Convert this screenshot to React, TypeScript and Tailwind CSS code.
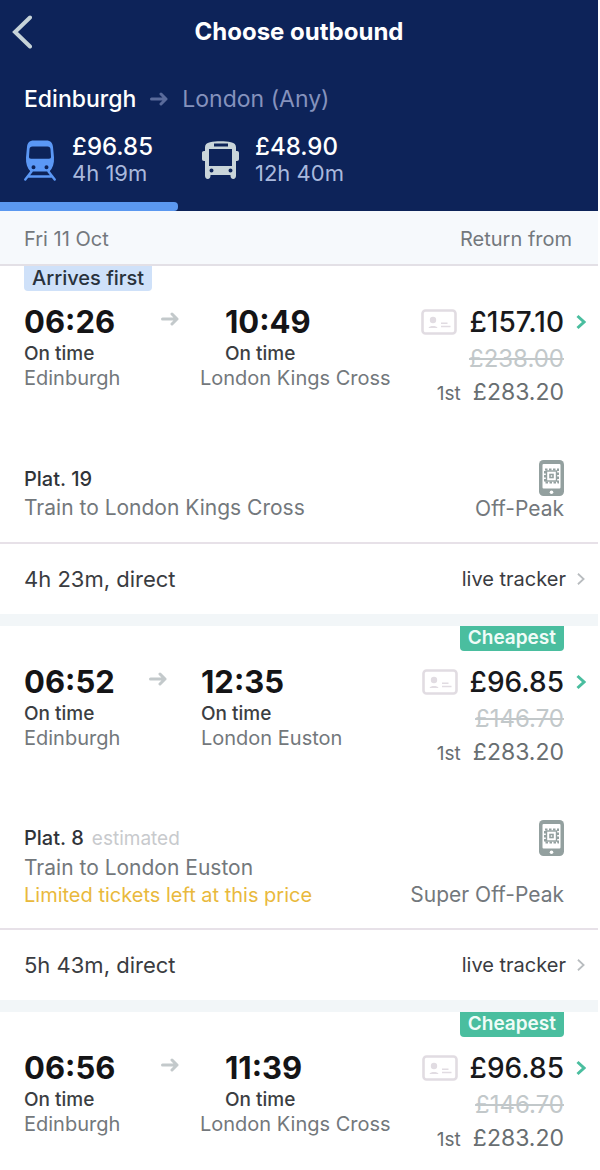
import { useState } from "react";
import clsx from "clsx";

type Journey = {
  departs: string;
  arrives: string;
  from: string;
  to: string;
  indent: boolean;
  badge: "first" | "cheapest";
  price: string;
  oldPrice: string;
  firstClass: string;
  platform?: string;
  estimated?: boolean;
  limited?: boolean;
  ticket?: string;
  duration?: string;
};

const FARES = [
  { id: "train", price: "£96.85", duration: "4h 19m" },
  { id: "coach", price: "£48.90", duration: "12h 40m" },
];

const JOURNEYS: Journey[] = [
  {
    departs: "06:26",
    arrives: "10:49",
    from: "Edinburgh",
    to: "London Kings Cross",
    indent: true,
    badge: "first",
    price: "£157.10",
    oldPrice: "£238.00",
    firstClass: "£283.20",
    platform: "19",
    ticket: "Off-Peak",
    duration: "4h 23m, direct",
  },
  {
    departs: "06:52",
    arrives: "12:35",
    from: "Edinburgh",
    to: "London Euston",
    indent: false,
    badge: "cheapest",
    price: "£96.85",
    oldPrice: "£146.70",
    firstClass: "£283.20",
    platform: "8",
    estimated: true,
    limited: true,
    ticket: "Super Off-Peak",
    duration: "5h 43m, direct",
  },
  {
    departs: "06:56",
    arrives: "11:39",
    from: "Edinburgh",
    to: "London Kings Cross",
    indent: true,
    badge: "cheapest",
    price: "£96.85",
    oldPrice: "£146.70",
    firstClass: "£283.20",
  },
];

function Arrow({ className }: { className: string }) {
  return (
    <svg
      className={className}
      viewBox="0 0 18 16"
      fill="none"
      stroke="currentColor"
      strokeLinecap="round"
      strokeLinejoin="round"
    >
      <path d="M1.5 8H16M11 3l5 5-5 5" />
    </svg>
  );
}

function Chevron({ className }: { className: string }) {
  return (
    <svg className={className} viewBox="0 0 10 16" fill="none" stroke="currentColor">
      <path d="M1.5 2L8 8l-6.5 6" />
    </svg>
  );
}

function TrainIcon() {
  return (
    <svg className="w-8 h-[41px] text-[#5b98f6]" viewBox="0 0 32 41" fill="currentColor">
      <path
        fillRule="evenodd"
        d="M10 .5h12c5 0 6.500 2.500 7 6.500l1 10.500c.3 6-1.200 10.500-4.500 14h-19C3.200 28 1.700 23.500 2 17.500L3 7C3.500 3 5 .5 10 .5ZM8.500 6.500c-2 0-2.800.8-3 2.800L5 16.500c-.1 1.500.6 2.200 2 2.200h18c1.400 0 2.100-.7 2-2.200l-.5-7.200c-.2-2-1-2.800-3-2.800h-15ZM9.500 25.200a2 2 0 1 0 0 4 2 2 0 0 0 0-4Zm13 0a2 2 0 1 0 0 4 2 2 0 0 0 0-4Z"
      />
      <path
        d="M7.500 31.500L1.300 39.500M24.500 31.500l6.200 8M5 36.500h22"
        fill="none"
        stroke="currentColor"
        strokeWidth="2.400"
        strokeLinecap="round"
      />
    </svg>
  );
}

function CoachIcon() {
  return (
    <svg className="w-[37px] h-[38px] text-[#c9d5da]" viewBox="0 0 37 38" fill="currentColor">
      <path
        fillRule="evenodd"
        d="M8 1.200C14-.2 23-.2 29 1.200c3.500.8 5 2.300 5 5V10h1c1.300 0 2 .8 2 2v6c0 1.300-.7 2-2 2h-1v14.500c0 2-1 3.500-2.800 3.500-1.700 0-2.700-1.500-2.700-3.500V34h-20v.5c0 2-1 3.500-2.700 3.500C4 38 3 36.500 3 34.500V20H2c-1.300 0-2-.7-2-2v-6c0-1.200.7-2 2-2h1V6.200c0-2.700 1.500-4.200 5-5ZM12 2.500V5.500h14v-3H12ZM7 8v17h23V8H7Zm2.500 19.500a2 2 0 1 0 0 4 2 2 0 0 0 0-4Zm19 0a2 2 0 1 0 0 4 2 2 0 0 0 0-4Z"
      />
    </svg>
  );
}

function RailcardIcon() {
  return (
    <svg className="w-9 h-[26px] text-[#e1dce2]" viewBox="0 0 36 26" fill="none" stroke="currentColor">
      <rect x="1.500" y="1.500" width="33" height="23" rx="3" strokeWidth="2.600" />
      <circle cx="12" cy="11" r="3.200" fill="currentColor" stroke="none" />
      <path d="M7.500 19c1-2.600 8-2.600 9 0Z" fill="currentColor" stroke="none" />
      <path d="M20 14.200h6.500M20 17.500h9.500" strokeWidth="1.400" />
    </svg>
  );
}

function MobileTicketIcon() {
  return (
    <svg className="w-[25px] h-9 text-[#93a09f]" viewBox="0 0 25 36">
      <rect width="25" height="36" rx="4.500" fill="currentColor" />
      <rect x="3.500" y="4" width="18" height="24.500" rx="1" fill="#fff" />
      <circle cx="12.500" cy="32.200" r="1.800" fill="#fff" />
      <g fill="none" stroke="currentColor">
        <rect x="6" y="9.500" width="13" height="13" strokeWidth="2" strokeDasharray="2.500 1.500" />
        <rect x="7.500" y="11" width="10" height="10" strokeWidth="1.400" />
        <rect x="11" y="14.500" width="3" height="3" strokeWidth="1.600" />
      </g>
    </svg>
  );
}

function Badge({ type }: { type: Journey["badge"] }) {
  if (type === "first") {
    return (
      <span className="rounded-b-sm bg-[#cfe1f9] px-2 text-[20px] leading-6 font-medium text-[#29323c]">
        Arrives first
      </span>
    );
  }
  return (
    <span className="ml-auto rounded-b-sm bg-[#4abe9f] px-2 text-[19px] leading-6 font-semibold text-[#f0fcf8]">
      Cheapest
    </span>
  );
}

function JourneyCard({ journey }: { journey: Journey }) {
  return (
    <article className="bg-white">
      <div className="flex h-[25px] pl-6 pr-[34px]">
        <Badge type={journey.badge} />
      </div>

      {/* Times and prices */}
      <div className="flex justify-between pl-6 pr-3 pt-3">
        <div className="whitespace-nowrap">
          <div className="flex text-[31px] leading-[38px] font-bold text-[#141416]">
            <div className={clsx("flex", journey.indent ? "w-[201px]" : "w-[177px]")}>
              <time>{journey.departs}</time>
              <Arrow className="mx-auto mt-2 w-[18px] h-4 stroke-[3] text-[#c3c9cb]" />
            </div>
            <time>{journey.arrives}</time>
          </div>
          <div className="flex text-[19px] leading-[25px] font-medium text-[#3b3e42]">
            <span className={journey.indent ? "w-[201px]" : "w-[177px]"}>On time</span>
            <span>On time</span>
          </div>
          <div className="flex text-[20px] leading-6 text-[#73787c]">
            <span className={journey.indent ? "w-44" : "w-[177px]"}>{journey.from}</span>
            <span>{journey.to}</span>
          </div>
        </div>
        <div className="flex flex-col items-end">
          <button className="flex items-center text-[28px] leading-[38px] font-medium text-[#18191c]">
            <RailcardIcon />
            <span className="ml-3">{journey.price}</span>
            <Chevron className="ml-3 w-2.5 h-4 stroke-[3] text-[#4abe9f]" />
          </button>
          <del className="mr-[22px] text-[24px] leading-9 text-[#c2c8ca] decoration-2">{journey.oldPrice}</del>
          <p className="mr-[22px] flex items-baseline gap-3 text-[23px] leading-[30px] text-[#686e71]">
            <span className="text-[19px]">1st</span>
            {journey.firstClass}
          </p>
        </div>
      </div>

      {/* Platform and ticket type */}
      {journey.ticket && (
        <div className="flex items-end justify-between pl-6 pr-[34px] pt-[51px] pb-5">
          <div>
            <p className="text-[20px] leading-[30px] font-medium text-[#303338]">
              Plat. {journey.platform}
              {journey.estimated && <span className="ml-2 text-[19px] font-normal text-[#c8cacd]">estimated</span>}
            </p>
            <p className="text-[21px] leading-7 text-[#73787c]">
              Train to {journey.to}
            </p>
            {journey.limited && (
              <p className="text-[20px] leading-[26px] text-[#e9b93c]">
                Limited tickets left at this price
              </p>
            )}
          </div>
          <div className={clsx("flex flex-col items-end text-[21px] leading-[26px] text-[#73787c]", journey.limited && "gap-[26px]")}>
            <MobileTicketIcon />
            {journey.ticket}
          </div>
        </div>
      )}

      {journey.duration && (
        <div className="flex items-center justify-between border-t-2 border-[#e7e1e8] pl-6 pr-3 text-[22px] leading-[70px] text-[#3a3c41]">
          <span>{journey.duration}</span>
          <a href="#tracker" className="flex items-center text-[20px]">
            live tracker
            <Chevron className="ml-2.5 w-2.5 h-3.5 stroke-2 text-[#b8bcbf]" />
          </a>
        </div>
      )}
    </article>
  );
}

export default function App() {
  const [mode, setMode] = useState("train");

  return (
    <div className="bg-white pr-0.5 font-['Inter',sans-serif]">
      <header className="bg-[#0d2359] text-white">
        <div className="grid grid-cols-[48px_1fr_48px] items-center h-16">
          <button aria-label="Back" className="pl-3">
            <svg className="w-5 h-[34px]" viewBox="0 0 20 34" fill="none" stroke="#c6d3d8" strokeWidth="4" strokeLinecap="round">
              <path d="M18 2.500L3 17l15 14.500" />
            </svg>
          </button>
          <h1 className="text-center text-[24px] font-bold">Choose outbound</h1>
        </div>

        <div className="flex items-center pl-6 pt-[17px] pb-px text-[23px] leading-9">
          <span className="font-medium">Edinburgh</span>
          <Arrow className="mx-3.5 w-[18px] h-4 stroke-[3] text-[#5a6b9b]" />
          <span className="text-[#8592bd]">London (Any)</span>
        </div>

        <nav className="flex">
          {FARES.map((fare) => (
            <button
              key={fare.id}
              onClick={() => setMode(fare.id)}
              className={clsx("flex flex-col text-left", fare.id === "train" ? "w-[178px]" : "w-[200px]")}
            >
              <span className="flex items-center gap-4 pl-6 pt-4 pb-4 h-[84px]">
                {fare.id === "train" ? <TrainIcon /> : <CoachIcon />}
                <span>
                  <span className="block text-[24px] leading-[26px] font-medium">{fare.price}</span>
                  <span className="block text-[22px] leading-[26px] text-[#a9b9dd]">{fare.duration}</span>
                </span>
              </span>
              <span className={clsx("h-[9px] w-full rounded-r", mode === fare.id && "bg-[#5b98f0]")} />
            </button>
          ))}
        </nav>
      </header>

      <div className="flex justify-between border-b-2 border-[#e3e0e6] bg-[#f6f9fc] pl-6 pr-[26px] pt-1 text-[20px] leading-[49px] text-[#73787d]">
        <span>Fri 11 Oct</span>
        <span>Return from</span>
      </div>

      <main className="flex flex-col gap-3 bg-[#f2f6f8]">
        {JOURNEYS.map((journey) => (
          <JourneyCard key={journey.departs} journey={journey} />
        ))}
      </main>
    </div>
  );
}
